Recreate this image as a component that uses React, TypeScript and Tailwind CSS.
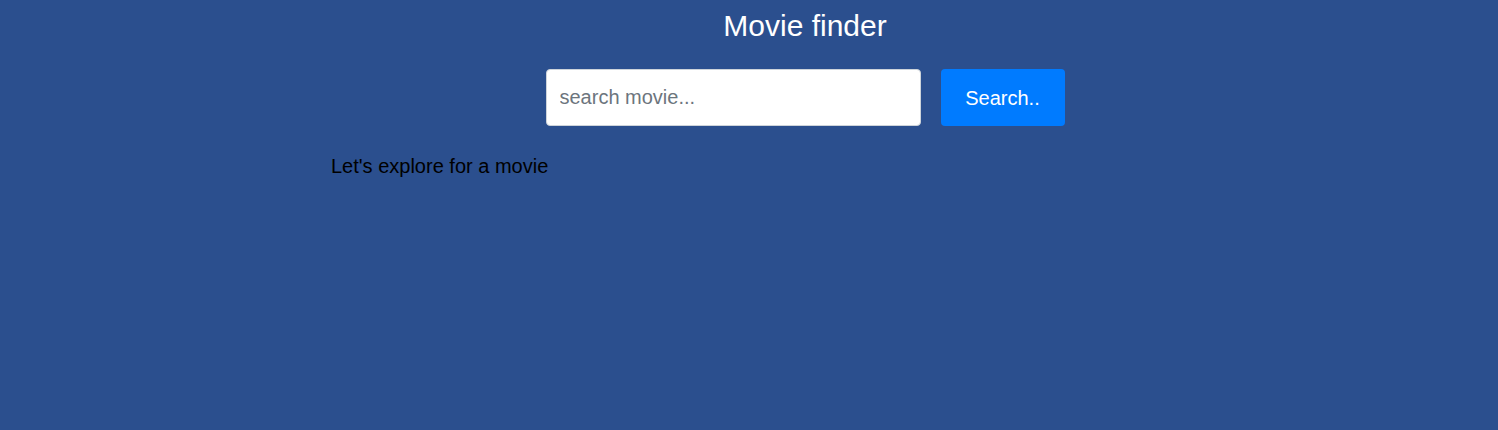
import React, { useState } from 'react';

const App = () => {
  const [query, setQuery] = useState('');

  return (
    <main
      className="min-h-screen w-full bg-[#2b4f8e] text-black"
      style={{ fontFamily: '"Liberation Sans", Arial, sans-serif' }}
    >
      {/* header is centred slightly right of the page centre */}
      <div className="pl-[112px]">
        <h1 className="pt-[9px] text-center text-[30px] leading-[34px] text-white">
          Movie finder
        </h1>

        <div className="mt-[26px] flex justify-center gap-5">
          <input
            type="text"
            value={query}
            onChange={(e) => setQuery(e.target.value)}
            placeholder="search movie..."
            className="h-[57px] w-[375px] rounded border border-[#ced4da] bg-white px-[13px] text-[20px] text-[#495057] outline-none placeholder:text-[#6c757d]"
          />
          <button className="h-[57px] w-[124px] rounded bg-[#007bff] text-[20px] text-white">
            Search..
          </button>
        </div>
      </div>

      {/* results area */}
      <div className="mx-auto mt-[29px] w-[836px]">
        <p className="text-[20px] leading-[23px]">Let's explore for a movie</p>
      </div>
    </main>
  );
};

export default App;
